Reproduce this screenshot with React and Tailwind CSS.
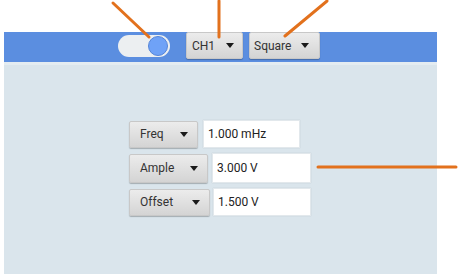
import React from "react";

const btn =
  "flex items-center justify-between bg-gradient-to-b from-[#ececec] to-[#d4d4d4] border border-[#c8c8c8] rounded-[2px] shadow-[0_1px_1px_rgba(0,0,0,0.25)] text-[12px] text-[#333]";

function Caret() {
  return (
    <svg width="8" height="5" viewBox="0 0 8 5">
      <path d="M0 0 L8 0 L4 5 Z" fill="#1a1a1a" />
    </svg>
  );
}

function Row({ label, value, btnW, inW, h, gap }) {
  return (
    <div className="flex items-center" style={{ gap }}>
      <div className={`${btn} pl-[10px] pr-[9px]`} style={{ width: btnW, height: h }}>
        <span>{label}</span>
        <Caret />
      </div>
      <div
        className="flex items-center bg-white border border-[#e2e8ec] shadow-[0_0_1px_rgba(0,0,0,0.15)] text-[12px] text-[#222] px-[4px]"
        style={{ width: inW, height: h + 1 }}
      >
        {value}
      </div>
    </div>
  );
}

export default function App() {
  return (
    <div className="relative w-[459px] h-[279px] bg-white overflow-hidden font-['Roboto',sans-serif]">
      <div className="ml-[4px] pt-[32px]">
        <div className="w-[433px] h-[242px] flex flex-col bg-[#dae5ec]">
          {/* Header bar */}
          <div className="h-[30px] bg-[#5b8ee0] flex items-start pl-[114px]">
            <div className="mt-[3px] w-[52px] h-[22px] rounded-full bg-[#eceff1] flex items-center justify-end pr-[2px]">
              <div className="w-[20px] h-[20px] rounded-full bg-[#6fa2f7] border border-[#5585d8]" />
            </div>
            <div className={`${btn} ml-[16px] w-[57px] h-[27px] pl-[5px] pr-[8px]`}>
              <span>CH1</span>
              <Caret />
            </div>
            <div className={`${btn} ml-[6px] w-[71px] h-[27px] pl-[4px] pr-[10px]`}>
              <span>Square</span>
              <Caret />
            </div>
          </div>
          <div className="h-[3px] bg-[#e4ecf1]" />

          {/* Form */}
          <div className="flex flex-col gap-[5px] pl-[125px] pt-[55px]">
            <Row label="Freq" value="1.000 mHz" btnW={69} inW={97} h={27} gap={5} />
            <Row label="Ample" value="3.000 V" btnW={79} inW={99} h={29} gap={4} />
            <Row label="Offset" value="1.500 V" btnW={81} inW={98} h={27} gap={3} />
          </div>
        </div>
      </div>

      {/* Callout arrows */}
      <svg className="absolute inset-0 pointer-events-none" width="459" height="279">
        <g stroke="#e2711d" strokeWidth="3" strokeLinecap="round">
          <line x1="113" y1="3" x2="149" y2="37" />
          <line x1="219" y1="1" x2="219" y2="37" />
          <line x1="327" y1="1" x2="285" y2="36" />
          <line x1="318" y1="167" x2="456" y2="167" />
        </g>
      </svg>
    </div>
  );
}
